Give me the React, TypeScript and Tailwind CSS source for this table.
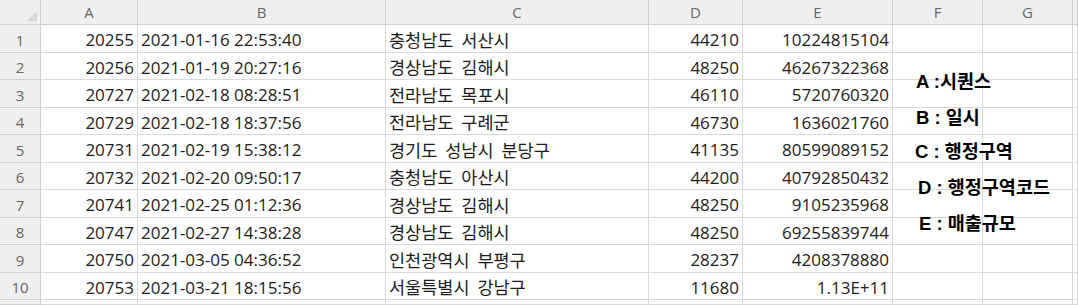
const columns = ["A", "B", "C", "D", "E", "F", "G", ""];

const rows = [
  ["20255", "2021-01-16 22:53:40", "충청남도 서산시", "44210", "10224815104"],
  ["20256", "2021-01-19 20:27:16", "경상남도 김해시", "48250", "46267322368"],
  ["20727", "2021-02-18 08:28:51", "전라남도 목포시", "46110", "5720760320"],
  ["20729", "2021-02-18 18:37:56", "전라남도 구례군", "46730", "1636021760"],
  ["20731", "2021-02-19 15:38:12", "경기도 성남시 분당구", "41135", "80599089152"],
  ["20732", "2021-02-20 09:50:17", "충청남도 아산시", "44200", "40792850432"],
  ["20741", "2021-02-25 01:12:36", "경상남도 김해시", "48250", "9105235968"],
  ["20747", "2021-02-27 14:38:28", "경상남도 김해시", "48250", "69255839744"],
  ["20750", "2021-03-05 04:36:52", "인천광역시 부평구", "28237", "4208378880"],
  ["20753", "2021-03-21 18:15:56", "서울특별시 강남구", "11680", "1.13E+11"],
];

// floating text box over F:G
const legend = [
  { text: "A :시퀀스", cls: "top-[68px] left-[916px]" },
  { text: "B : 일시", cls: "top-[104px] left-[916px]" },
  { text: "C : 행정구역", cls: "top-[138px] left-[915px]" },
  { text: "D : 행정구역코드", cls: "top-[174px] left-[918px]" },
  { text: "E : 매출규모", cls: "top-[210px] left-[919px]" },
];

const cell = "border-r border-b border-[#dadada] flex items-center pt-[3px] overflow-hidden whitespace-nowrap";
const head = "bg-[#efefef] border-r border-b border-[#cfcfcf] flex items-center justify-center text-[#666] text-[15px]";

export default function App() {
  return (
    <div
      className="relative w-[1078px] h-[305px] overflow-hidden bg-white text-[#1c1c1c] text-[17px]"
      style={{ fontFamily: '"Open Sans", "Noto Sans CJK KR", sans-serif' }}
    >
      <div className="grid grid-cols-[41px_97px_248px_263px_94px_150px_90px_90px_1fr] grid-rows-[25px_28px_27px_28px_27px_28px_27px_28px_27px_28px_27px_1fr] h-full">
        {/* corner */}
        <div className="bg-[#efefef] border-r border-b border-[#cfcfcf] relative">
          <svg className="absolute right-[3px] bottom-[3px]" width="10" height="10" viewBox="0 0 10 10">
            <path d="M10 0 L10 10 L0 10 Z" fill="#d6d6d6" />
          </svg>
        </div>
        {columns.map((c, i) => (
          <div key={"h" + i} className={head}>
            {c}
          </div>
        ))}

        {rows.map((r, i) => (
          <>
            <div key={"n" + i} className={head + " pt-[3px]"}>
              {i + 1}
            </div>
            <div className={cell + " justify-end pr-[3px]"}>{r[0]}</div>
            <div className={cell + " pl-[3px]"}>{r[1]}</div>
            <div className={cell + " pl-[3px]"}>
              <span className="text-[17.5px] [word-spacing:4px]" style={{ fontFamily: '"Noto Sans CJK KR", sans-serif' }}>
                {r[2]}
              </span>
            </div>
            <div className={cell + " justify-end pr-[3px]"}>{r[3]}</div>
            <div className={cell + " justify-end pr-[3px]"}>{r[4]}</div>
            <div className={cell}></div>
            <div className={cell}></div>
            <div className={cell}></div>
          </>
        ))}

        <div className={head}></div>
        {columns.map((c, i) => (
          <div key={"e" + i} className={cell}></div>
        ))}
      </div>

      {legend.map((l) => (
        <div
          key={l.text}
          className={"absolute font-bold text-[18.5px] text-black whitespace-nowrap " + l.cls}
          style={{ fontFamily: '"Liberation Sans", "Noto Sans CJK KR", sans-serif' }}
        >
          {l.text}
        </div>
      ))}
    </div>
  );
}
